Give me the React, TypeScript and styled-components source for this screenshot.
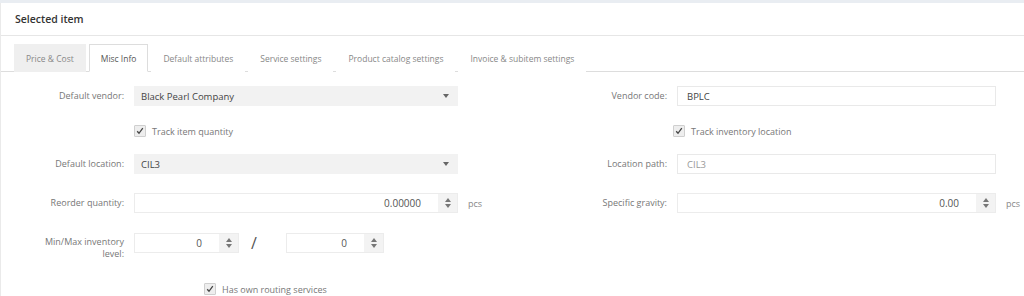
import React from 'react';
import styled, { createGlobalStyle } from 'styled-components';

const GlobalStyle = createGlobalStyle`
    html, body {
        margin: 0;
        padding: 0;
        background: #fff;
        font-family: "Open Sans", "Liberation Sans", sans-serif;
        font-size: 9px;
        color: #666;
    }
`;

const TopStrip = styled.div`
    height: 3px;
    background: #e9edf2;
`;

const Panel = styled.div`
    border-left: 1px solid #eaeaea;
    height: 293px;
    overflow: hidden;
`;

const Header = styled.div`
    height: 32px;
    padding-left: 14px;
    display: flex;
    align-items: center;
    border-bottom: 1px solid #e6e6e6;
    font-size: 10.5px;
    font-weight: 600;
    color: #333;
`;

const Tabs = styled.ul`
    display: flex;
    margin: 8px 0 0;
    padding: 0 0 0 13px;
    list-style: none;
    border-bottom: 1px solid #ddd;
`;

const Tab = styled.li<{ $active?: boolean; $grey?: boolean }>`
    height: 28px;
    display: flex;
    align-items: center;
    padding: 0 11px;
    margin-right: 3px;
    margin-bottom: -1px;
    box-sizing: border-box;
    font-size: 8.5px;
    color: ${p => (p.$active ? '#555' : '#888')};
    background: ${p => (p.$grey ? '#efefef' : '#fff')};
    border: 1px solid ${p => (p.$active ? '#ddd' : 'transparent')};
    border-bottom-color: ${p => (p.$active ? '#fff' : 'transparent')};
`;

const Form = styled.div`
    display: grid;
    grid-template-columns: 123px 324px 40px 149px 319px 19px;
    column-gap: 10px;
    padding-top: 14px;
    align-items: center;
`;

const Label = styled.div<{ $multi?: boolean }>`
    color: #777;
    display: flex;
    align-items: center;
    justify-content: flex-end;
    text-align: right;
    line-height: 12px;
    height: ${p => (p.$multi ? 'auto' : '20px')};
    ${p => p.$multi && 'align-self: start; padding-top: 4px;'}
`;

const Spacer = styled.div``;

const Select = styled.div`
    height: 20px;
    background: #f2f2f2;
    display: flex;
    align-items: center;
    justify-content: space-between;
    padding: 0 9px 0 7px;
    color: #444;
    font-size: 9.5px;
`;

const Caret = styled.span`
    width: 0;
    height: 0;
    border-left: 3px solid transparent;
    border-right: 3px solid transparent;
    border-top: 4px solid #666;
`;

const Input = styled.div<{ $muted?: boolean }>`
    height: 20px;
    box-sizing: border-box;
    border: 1px solid #e9e9e9;
    display: flex;
    align-items: center;
    padding-left: 9px;
    color: ${p => (p.$muted ? '#999' : '#444')};
    font-size: 9.5px;
`;

const NumberBox = styled.div<{ $w?: number }>`
    height: 20px;
    box-sizing: border-box;
    border: 1px solid #ececec;
    display: flex;
    align-items: stretch;
    width: ${p => (p.$w ? `${p.$w}px` : 'auto')};
`;

const NumberValue = styled.div`
    flex: 1;
    display: flex;
    align-items: center;
    justify-content: flex-end;
    padding-right: 17px;
    color: #555;
    font-size: 10px;
`;

const Spin = styled.div`
    width: 19px;
    background: #f3f3f3;
    display: flex;
    flex-direction: column;
    align-items: center;
    justify-content: center;
    gap: 2px;
`;

const Arrow = styled.span<{ $up?: boolean }>`
    width: 0;
    height: 0;
    border-left: 3px solid transparent;
    border-right: 3px solid transparent;
    ${p => (p.$up ? 'border-bottom: 4px solid #777;' : 'border-top: 4px solid #777;')}
`;

const Unit = styled.div`
    color: #888;
`;

const CheckRow = styled.label<{ $shift?: number; $top?: number }>`
    display: flex;
    align-items: center;
    gap: 6px;
    height: 20px;
    margin: ${p => p.$top ?? 15}px 0 13px ${p => p.$shift || 0}px;
    color: #777;
`;

const Box = styled.span`
    width: 10px;
    height: 10px;
    border: 1px solid #cfcfcf;
    background: #eee;
    display: flex;
    align-items: center;
    justify-content: center;
    border-radius: 1px;
`;

const Pair = styled.div`
    display: flex;
    align-items: center;
    align-self: start;
`;

const Slash = styled.span`
    font-size: 16px;
    color: #555;
    width: 47px;
    padding-left: 12px;
    box-sizing: border-box;
`;

const RowGap = styled.div<{ $h: number }>`
    grid-column: 1 / -1;
    height: ${p => p.$h}px;
`;

const Check = ({ label, shift, top }: { label: string; shift?: number; top?: number }) => (
    <CheckRow $shift={shift} $top={top}>
        <Box>
            <svg width="8" height="8" viewBox="0 0 8 8">
                <path d="M1.2 4.3 L3 6.3 L6.8 1.2" stroke="#444" strokeWidth="1.3" fill="none" />
            </svg>
        </Box>
        <span>{label}</span>
    </CheckRow>
);

const Num = ({ value, w }: { value: string; w?: number }) => (
    <NumberBox $w={w}>
        <NumberValue>{value}</NumberValue>
        <Spin>
            <Arrow $up />
            <Arrow />
        </Spin>
    </NumberBox>
);

const tabs = [
    'Price & Cost',
    'Misc Info',
    'Default attributes',
    'Service settings',
    'Product catalog settings',
    'Invoice & subitem settings',
];

const App = () => (
    <>
        <GlobalStyle />
        <TopStrip />
        <Panel>
            <Header>Selected item</Header>
            <Tabs>
                {tabs.map((t, i) => (
                    <Tab key={t} $grey={i === 0} $active={i === 1}>{t}</Tab>
                ))}
            </Tabs>
            <Form>
                <Label>Default vendor:</Label>
                <Select>Black Pearl Company<Caret /></Select>
                <Spacer />
                <Label>Vendor code:</Label>
                <Input>BPLC</Input>
                <Spacer />

                <Spacer />
                <Check label="Track item quantity" />
                <Spacer />
                <Spacer />
                <Check label="Track inventory location" shift={-4} />
                <Spacer />

                <Label>Default location:</Label>
                <Select>CIL3<Caret /></Select>
                <Spacer />
                <Label>Location path:</Label>
                <Input $muted>CIL3</Input>
                <Spacer />

                <RowGap $h={19} />

                <Label>Reorder quantity:</Label>
                <Num value="0.00000" />
                <Unit>pcs</Unit>
                <Label>Specific gravity:</Label>
                <Num value="0.00" />
                <Unit>pcs</Unit>

                <RowGap $h={19} />

                <Label $multi>Min/Max inventory<br />level:</Label>
                <Pair>
                    <Num value="0" w={105} />
                    <Slash>/</Slash>
                    <Num value="0" w={98} />
                </Pair>
                <Spacer />
                <Spacer />
                <Spacer />
                <Spacer />

                <Spacer />
                <Check label="Has own routing services" shift={70} top={19} />
            </Form>
        </Panel>
    </>
);

export default App;
